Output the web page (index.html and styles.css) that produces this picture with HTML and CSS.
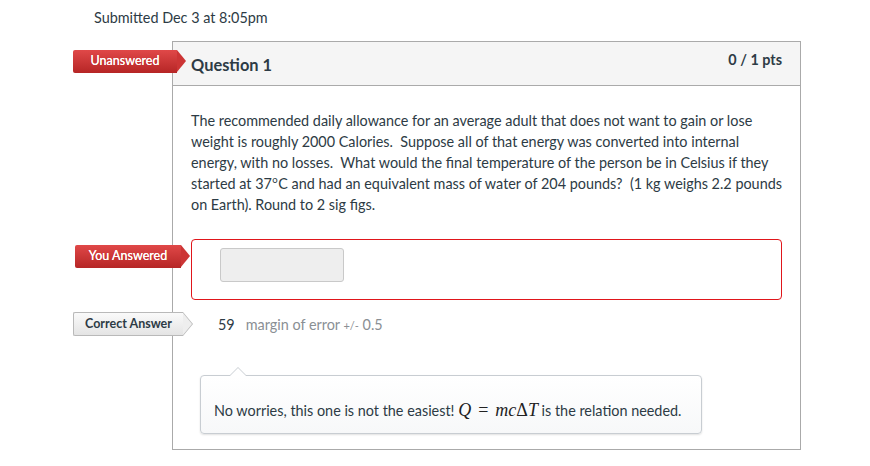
FILE: index.html
```html
<!DOCTYPE html>
<html>
<head>
<meta charset="utf-8">
<link rel="stylesheet" href="styles.css">
</head>
<body>
<div class="page">
  <div class="submitted">Submitted Dec 3 at 8:05pm</div>
  <div class="card">
    <div class="header">
      <span class="badge badge-red badge-q">Unanswered</span>
      <span class="qname">Question 1</span>
      <span class="pts">0 / 1 pts</span>
    </div>
    <div class="qtext">The recommended daily allowance for an average adult that does not want to gain or lose weight is roughly 2000 Calories.&nbsp; Suppose all of that energy was converted into internal energy, with no losses.&nbsp; What would the final temperature of the person be in Celsius if they started at 37<span class="deg">o</span>C and had an equivalent mass of water of 204 pounds?&nbsp; (1 kg weighs 2.2 pounds on Earth). Round to 2 sig figs.</div>
    <div class="row answer-row">
      <span class="badge badge-red badge-you">You Answered</span>
      <div class="answer-box"><div class="answer-input"></div></div>
    </div>
    <div class="row correct-row">
      <span class="badge badge-gray badge-correct">Correct Answer</span>
      <span class="num">59</span>
      <span class="margin">margin of error <small>+/-</small>&nbsp;0.5</span>
    </div>
    <div class="comment">No worries, this one is not the easiest! <span class="math"><i>Q</i><span class="eq">=</span><i>mc</i>Δ<i>T</i></span> is the relation needed.</div>
  </div>
</div>
</body>
</html>
```
FILE: styles.css
```css
html, body {
  margin: 0;
  padding: 0;
  background: #fff;
}
body {
  font-family: Lato, "Open Sans", sans-serif;
  color: #2d3b45;
  font-size: 14.4px;
}
.page {
  width: 870px;
  height: 466px;
  overflow: hidden;
}
.submitted {
  padding: 9px 0 0 94px;
  height: 32px;
  line-height: 18px;
  font-size: 14.4px;
  box-sizing: border-box;
}
.card {
  position: relative;
  margin: 9px 0 0 172px;
  width: 629px;
  height: 409px;
  box-sizing: border-box;
  border: 1px solid #aaaaaa;
}
.header {
  position: relative;
  height: 44px;
  box-sizing: border-box;
  background: #f5f5f5;
  border-bottom: 1px solid #aaaaaa;
  display: flex;
  justify-content: space-between;
  align-items: flex-start;
  padding: 0 18px;
}
.qname {
  font-weight: bold;
  font-size: 16.4px;
  line-height: 20px;
  margin-top: 13px;
}
.pts {
  font-weight: bold;
  font-size: 14.4px;
  line-height: 18px;
  margin-top: 9px;
  color: #2d3b45;
}
.qtext {
  padding: 24px 14px 0 18px;
  line-height: 21px;
  font-size: 14.4px;
  height: 129px;
  box-sizing: border-box;
  margin-bottom: 24px;
}
.deg {
  display: inline-block;
  font-size: 9.5px;
  line-height: 10px;
  vertical-align: 6px;
  margin: 0 0.5px;
}
.row {
  position: relative;
}
.answer-row {
  padding-left: 18px;
}
.answer-box {
  width: 591px;
  height: 61px;
  box-sizing: border-box;
  border: 1px solid #e0161b;
  border-radius: 4px;
  padding: 8px 0 0 28px;
}
.answer-input {
  width: 124px;
  height: 34px;
  box-sizing: border-box;
  background: #eeeeee;
  border: 1px solid #c9c9c9;
  border-radius: 3px;
}
.correct-row {
  margin-top: 12px;
  height: 24px;
  display: flex;
  align-items: center;
  padding-left: 45px;
}
.num {
  font-size: 14.4px;
  color: #2d3b45;
  margin-right: 11px;
}
.margin {
  color: #8a8f94;
  font-size: 14.4px;
}
.margin small {
  font-size: 11px;
}
.badge {
  position: absolute;
  height: 23px;
  box-sizing: border-box;
  line-height: 22px;
  font-size: 12.5px;
  white-space: nowrap;
  border-radius: 2px 0 0 2px;
  text-align: center;
}
.badge::after {
  content: "";
  position: absolute;
  top: 0;
  right: -9px;
  width: 0;
  height: 0;
  border-top: 11.5px solid transparent;
  border-bottom: 11.5px solid transparent;
  border-left: 9px solid #c43030;
}
.badge-red {
  color: #fff;
  background: linear-gradient(#e04848, #b62626);
  text-shadow: 0 0 0.4px #fff;
}
.badge-red::after {
  border-left-color: #cc3535;
}
.badge-q {
  left: -100px;
  top: 8px;
  width: 104px;
}
.badge-you {
  left: -98px;
  top: 6px;
  width: 106px;
}
.badge-gray {
  color: #2d3b45;
  background: linear-gradient(#fafafa, #e4e4e4);
  border: 1px solid #b9b9b9;
  border-right: none;
  line-height: 21px;
  font-weight: bold;
  font-size: 12.5px;
}
.badge-gray::before {
  content: "";
  position: absolute;
  top: -1px;
  right: -10px;
  width: 0;
  height: 0;
  border-top: 12px solid transparent;
  border-bottom: 12px solid transparent;
  border-left: 10px solid #b9b9b9;
}
.badge-gray::after {
  top: 0;
  right: -9px;
  border-top-width: 11px;
  border-bottom-width: 11px;
  border-left: 9px solid #eeeeee;
}
.badge-correct {
  left: -100px;
  top: 0;
  width: 110px;
  height: 24px;
}
.comment {
  position: relative;
  margin: 39px 0 0 27px;
  width: 502px;
  height: 59px;
  box-sizing: border-box;
  border: 1px solid #c8cdd2;
  border-radius: 4px;
  background: linear-gradient(#ffffff, #f7f8f9);
  box-shadow: 0 1px 2px rgba(0, 0, 0, 0.12);
  padding: 23px 13px 0 13px;
  line-height: 22px;
  font-size: 14.4px;
  color: #2d3b45;
}
.comment::before {
  content: "";
  position: absolute;
  top: -9px;
  left: 28px;
  width: 0;
  height: 0;
  border-left: 9px solid transparent;
  border-right: 9px solid transparent;
  border-bottom: 9px solid #c8cdd2;
}
.comment::after {
  content: "";
  position: absolute;
  top: -8px;
  left: 29px;
  width: 0;
  height: 0;
  border-left: 8px solid transparent;
  border-right: 8px solid transparent;
  border-bottom: 8px solid #ffffff;
}
.math {
  font-family: "Liberation Serif", "DejaVu Serif", serif;
  font-size: 18px;
  color: #222;
}
.math i {
  font-style: italic;
}
.eq {
  margin: 0 7px;
}
```
